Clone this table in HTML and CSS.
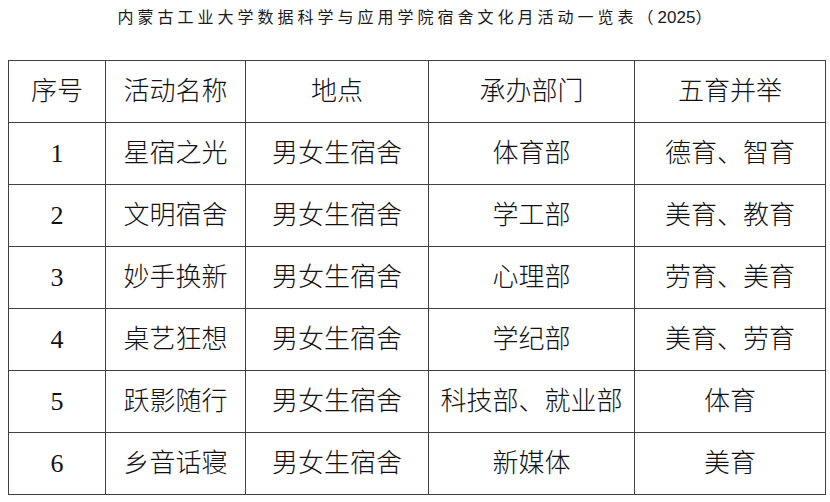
FILE: index.html
```html
<!DOCTYPE html>
<html lang="zh-CN">
<head>
<meta charset="utf-8">
<title>宿舍文化月活动一览表</title>
<link rel="stylesheet" href="styles.css">
</head>
<body>
<div class="page">
  <h1 class="title">内蒙古工业大学数据科学与应用学院宿舍文化月活动一览表（<span class="year">2025</span>）</h1>
  <table class="sheet">
    <colgroup>
      <col class="c-no">
      <col class="c-name">
      <col class="c-place">
      <col class="c-dept">
      <col class="c-edu">
    </colgroup>
    <thead>
      <tr><th>序号</th><th>活动名称</th><th>地点</th><th>承办部门</th><th>五育并举</th></tr>
    </thead>
    <tbody>
      <tr><td>1</td><td>星宿之光</td><td>男女生宿舍</td><td>体育部</td><td>德育、智育</td></tr>
      <tr><td>2</td><td>文明宿舍</td><td>男女生宿舍</td><td>学工部</td><td>美育、教育</td></tr>
      <tr><td>3</td><td>妙手换新</td><td>男女生宿舍</td><td>心理部</td><td>劳育、美育</td></tr>
      <tr><td>4</td><td>桌艺狂想</td><td>男女生宿舍</td><td>学纪部</td><td>美育、劳育</td></tr>
      <tr><td>5</td><td>跃影随行</td><td>男女生宿舍</td><td>科技部、就业部</td><td>体育</td></tr>
      <tr><td>6</td><td>乡音话寝</td><td>男女生宿舍</td><td>新媒体</td><td>美育</td></tr>
    </tbody>
  </table>
</div>
</body>
</html>
```

FILE: styles.css
```css
html, body {
  margin: 0;
  padding: 0;
  background: #ffffff;
}

body {
  font-family: "Liberation Serif", "Noto Sans CJK SC", serif;
  color: #111111;
}

.page {
  padding: 0 5px 0 8px;
}

.title {
  margin: 0;
  height: 60px;
  padding-top: 6px;
  box-sizing: border-box;
  text-align: center;
  font-family: "Noto Sans CJK SC", sans-serif;
  font-weight: 400;
  font-size: 16px;
  line-height: 20px;
  letter-spacing: 4px;
  color: #1a1a1a;
}

.year {
  letter-spacing: 0;
  font-family: "Liberation Sans", "Noto Sans CJK SC", sans-serif;
  font-size: 17px;
}

.sheet {
  border-collapse: collapse;
  table-layout: fixed;
  width: 817px;
}

.c-no { width: 97px; }
.c-name { width: 140px; }
.c-place { width: 183px; }
.c-dept { width: 206px; }
.c-edu { width: 191px; }

.sheet th,
.sheet td {
  border: 1px solid #404040;
  height: 62px;
  padding: 0;
  box-sizing: border-box;
  text-align: center;
  vertical-align: middle;
  font-size: 26px;
  font-weight: 300;
  line-height: 30px;
  white-space: nowrap;
  color: #111111;
}
```
